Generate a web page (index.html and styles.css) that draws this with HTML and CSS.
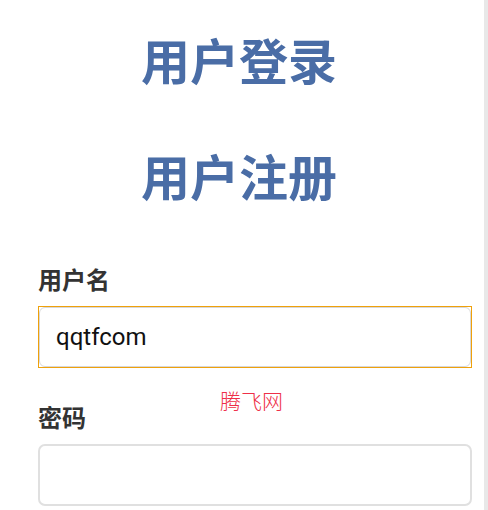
FILE: index.html
```html
<!DOCTYPE html>
<html lang="zh">
<head>
<meta charset="utf-8">
<link rel="stylesheet" href="styles.css">
</head>
<body>
<div class="page">
  <main class="main">
    <div class="titles">
      <h1 class="title">用户登录</h1>
      <h1 class="title title-second">用户注册</h1>
    </div>
    <form class="form">
      <label class="label" for="user">用户名</label>
      <div class="focus-ring">
        <input class="input input-focused" id="user" type="text" value="qqtfcom">
      </div>
      <label class="label label-second" for="pass">密码</label>
      <input class="input input-plain" id="pass" type="password">
    </form>
    <div class="watermark">腾飞网</div>
  </main>
  <div class="scrollbar"></div>
</div>
</body>
</html>
```
FILE: styles.css
```css
html, body {
  margin: 0;
  padding: 0;
  background: #ffffff;
}
body {
  font-family: "Noto Sans CJK SC", "Noto Sans", sans-serif;
}
.page {
  display: flex;
  height: 510px;
  overflow: hidden;
}
.main {
  position: relative;
  flex: 1;
}
.scrollbar {
  width: 4px;
  background: #e8e8e8;
}
.titles {
  padding: 30px 6px 0 0;
  text-align: center;
}
.title {
  margin: 0;
  font-size: 49px;
  line-height: 58px;
  font-weight: 700;
  color: #4a6da6;
}
.title-second {
  margin-top: 58px;
}
.form {
  display: flex;
  flex-direction: column;
  padding: 59px 12px 0 38px;
}
.label {
  font-size: 24px;
  line-height: 32px;
  font-weight: 700;
  color: #333333;
  margin-bottom: 11px;
}
.label-second {
  margin-top: 33px;
}
.focus-ring {
  border: 1px solid #efa10b;
  display: flex;
}
.input {
  box-sizing: border-box;
  width: 100%;
  margin: 0;
  padding: 0 16px;
  font-family: Roboto, "Noto Sans", sans-serif;
  font-size: 24px;
  color: #111111;
  background: #ffffff;
  outline: none;
}
.input-focused {
  height: 60px;
  border: 1px solid #d8d8d8;
  border-radius: 6px;
}
.input-plain {
  height: 62px;
  border: 2px solid #e0e0e0;
  border-radius: 7px;
}
.watermark {
  position: absolute;
  left: 220px;
  top: 385px;
  font-size: 21px;
  line-height: 30px;
  font-weight: 300;
  color: #ee2f48;
}
```
